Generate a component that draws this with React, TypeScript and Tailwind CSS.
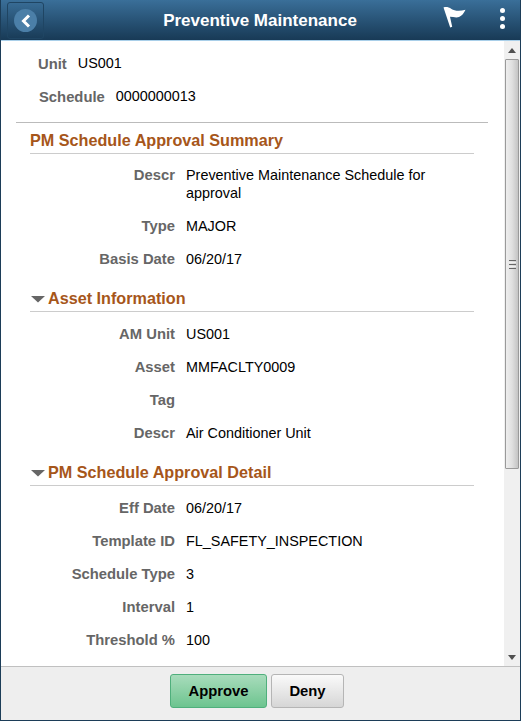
const font = { fontFamily: '"Liberation Sans", Arial, sans-serif' };

function Row({ label, value, h = 33 }: { label: string; value?: string; h?: number }) {
  return (
    <div className="flex items-start" style={{ height: h }}>
      <div className="w-[174px] text-right text-[14.8px] leading-[18px] font-bold text-[#666666] shrink-0">{label}</div>
      <div className="ml-[11px] text-[14.4px] leading-[18px] text-[#000000] w-[270px]">{value}</div>
    </div>
  );
}

function Section({ title, arrow }: { title: string; arrow?: boolean }) {
  return (
    <div className="ml-[29px] mr-[30px] h-[25px] pb-[2px] border-b border-[#cccccc] flex items-center gap-[3px]">
      {arrow && (
        <svg width="15" height="8" viewBox="0 0 15 8" className="mt-[1px]"><path d="M1 1h14L8 7.500z" fill="#666666" /></svg>
      )}
      <span className="text-[16.2px] leading-[20px] font-bold text-[#a6561a]">{title}</span>
    </div>
  );
}

export default function App() {
  return (
    <div className="w-[521px] h-[721px] flex flex-col overflow-hidden bg-white border-x border-[#1c3d58]" style={font}>
      <header className="h-[41px] shrink-0 flex items-center justify-between border-b border-[#a9cfe9] bg-gradient-to-b from-[#3a6f99] to-[#183a56] relative">
        <div className="ml-[6px] mt-[1px] w-[37px] h-[37px] rounded-[3px] border border-[#1f4563] flex items-center justify-center">
          <div className="w-[23px] h-[23px] rounded-full bg-[#4b7fa8] flex items-center justify-center">
            <svg width="12" height="14" viewBox="0 0 12 14"><path d="M9 1.500 3.500 7 9 12.500" fill="none" stroke="#fff" strokeWidth="3" /></svg>
          </div>
        </div>
        <div className="absolute left-0 right-0 top-[11px] pr-[1px] text-center text-[17px] leading-[20px] font-bold text-white">Preventive Maintenance</div>
        <div className="flex items-center mr-[15px]">
          <svg width="26" height="24" viewBox="0 0 26 24" className="mb-[4px]"><path d="M1.500 1.500C4 .5 6.500 1 9.500 3c3 2 8 2.500 14 .8C22 7 20 10 17 11c-3 1-6-.2-9-.3l2.200 10-2 .7L1.500 1.500z" fill="#fff" /></svg>
          <div className="ml-[32px] mb-[4px] flex flex-col gap-[3px]">
            <span className="w-[5px] h-[5px] rounded-full bg-white" />
            <span className="w-[5px] h-[5px] rounded-full bg-white" />
            <span className="w-[5px] h-[5px] rounded-full bg-white" />
          </div>
        </div>
      </header>

      <div className="flex-1 min-h-0 flex">
        <main className="flex-1 min-w-0 overflow-hidden pt-[13px]">
          <div className="flex items-start h-[33px]">
            <div className="ml-[37px] text-[14.8px] leading-[18px] font-bold text-[#666666] mt-[1px]">Unit</div>
            <div className="ml-[11px] text-[14.4px] leading-[18px]">US001</div>
          </div>
          <div className="flex items-start h-[33px]">
            <div className="ml-[38px] text-[14.8px] leading-[18px] font-bold text-[#666666] mt-[1px]">Schedule</div>
            <div className="ml-[11px] text-[14.4px] leading-[18px]">0000000013</div>
          </div>
          <div className="ml-[15px] mr-[16px] mt-[2px] border-t border-[#bbbbbb]" />
          <div className="mt-[6px]"><Section title="PM Schedule Approval Summary" /></div>
          <div className="mt-[12px]">
            <div className="flex items-start h-[51px]">
              <div className="w-[174px] text-right text-[14.8px] leading-[18px] font-bold text-[#666666] shrink-0">Descr</div>
              <div className="ml-[11px] text-[14.4px] leading-[18px] w-[270px]">Preventive Maintenance Schedule for approval</div>
            </div>
            <Row label="Type" value="MAJOR" />
            <Row label="Basis Date" value="06/20/17" />
          </div>
          <div className="mt-[4px]"><Section title="Asset Information" arrow /></div>
          <div className="mt-[13px]">
            <Row label="AM Unit" value="US001" />
            <Row label="Asset" value="MMFACLTY0009" />
            <Row label="Tag" />
            <Row label="Descr" value="Air Conditioner Unit" />
          </div>
          <div className="mt-[4px]"><Section title="PM Schedule Approval Detail" arrow /></div>
          <div className="mt-[13px]">
            <Row label="Eff Date" value="06/20/17" />
            <Row label="Template ID" value="FL_SAFETY_INSPECTION" />
            <Row label="Schedule Type" value="3" />
            <Row label="Interval" value="1" />
            <Row label="Threshold %" value="100" />
          </div>
        </main>
        <aside className="w-[16px] shrink-0 bg-[#f0f0f0] flex flex-col">
          <div className="h-[18px] flex items-center justify-center">
            <svg width="8" height="5" viewBox="0 0 8 5"><path d="M4 0 8 5H0z" fill="#505050" /></svg>
          </div>
          <div className="h-[410px] mx-[1px] border border-[#9a9a9a] rounded-[1px] bg-gradient-to-r from-[#eeeeee] via-[#e0e0e0] to-[#c4c4c4] flex items-center justify-center">
            <div className="w-[7px] flex flex-col gap-[1px]">
              <span className="h-[1px] bg-[#666666]" /><span className="h-[1px] bg-[#eeeeee]" />
              <span className="h-[1px] bg-[#666666]" /><span className="h-[1px] bg-[#eeeeee]" />
              <span className="h-[1px] bg-[#666666]" />
            </div>
          </div>
          <div className="flex-1 flex items-end justify-center pb-[6px]">
            <svg width="8" height="5" viewBox="0 0 8 5"><path d="M4 5 8 0H0z" fill="#505050" /></svg>
          </div>
        </aside>
      </div>

      <footer className="h-[55px] shrink-0 bg-[#eeeeee] border-t border-[#c0c0c0] border-b border-b-[#1c3d58] flex justify-center gap-[4px] pt-[7px] pr-[6px]">
        <button className="ml-[-1px] w-[97px] h-[34px] rounded-[3px] border border-[#4faf7c] bg-gradient-to-b from-[#a8dcbc] to-[#6cc48f] text-[14.8px] font-bold text-black">Approve</button>
        <button className="w-[73px] h-[34px] rounded-[3px] border border-[#b5b5b5] bg-gradient-to-b from-[#fafafa] to-[#d6d6d6] text-[14.8px] font-bold text-black">Deny</button>
      </footer>
    </div>
  );
}
